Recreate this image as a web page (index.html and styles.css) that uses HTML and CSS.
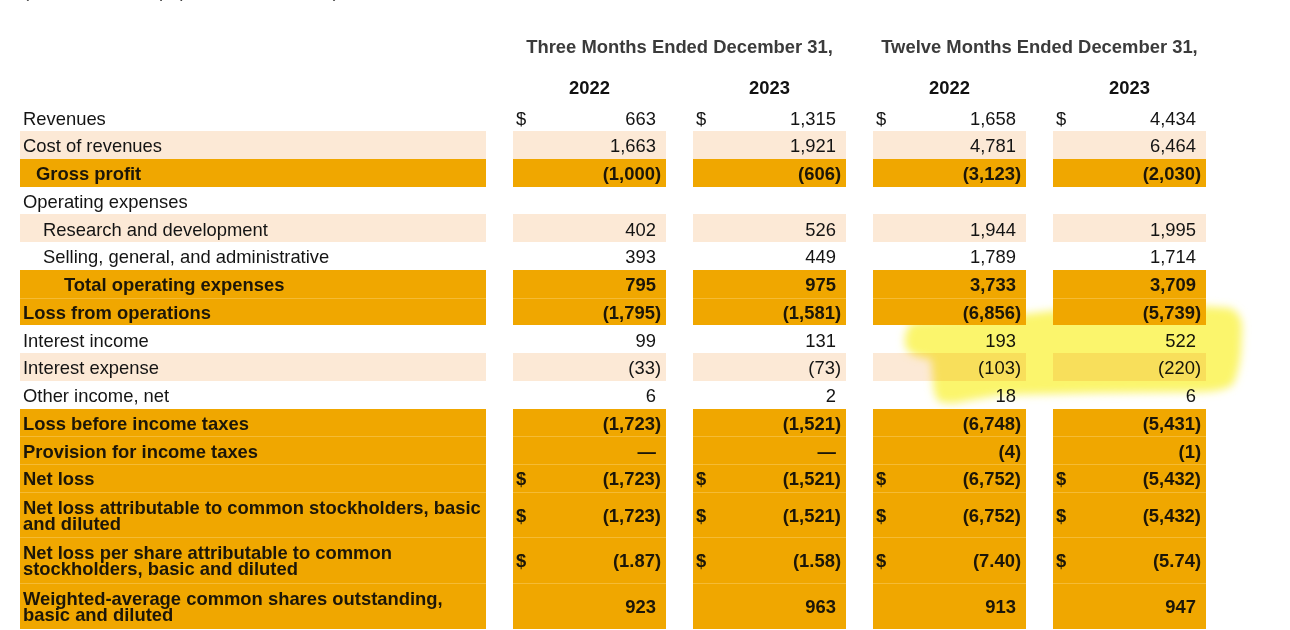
FILE: index.html
```html
<!DOCTYPE html>
<html lang="en">
<head>
<meta charset="utf-8">
<title>Condensed Consolidated Statements of Operations</title>
<link rel="stylesheet" href="styles.css">
</head>
<body>
<div class="page">
  <div class="sheet">
    <div class="caption">(in millions, except per share amounts)</div>

    <div class="grid periods">
      <div></div>
      <div class="span2">Three Months Ended December 31,</div>
      <div class="span2">Twelve Months Ended December 31,</div>
    </div>
    <div class="grid years">
      <div></div>
      <div>2022</div>
      <div>2023</div>
      <div>2022</div>
      <div>2023</div>
    </div>

    <div class="body">
      <div class="grid row">
        <div class="label">Revenues</div>
        <div class="cell"><span class="cur">$</span><span class="amt">663</span></div>
        <div class="cell"><span class="cur">$</span><span class="amt">1,315</span></div>
        <div class="cell"><span class="cur">$</span><span class="amt">1,658</span></div>
        <div class="cell"><span class="cur">$</span><span class="amt">4,434</span></div>
      </div>
      <div class="grid row peach">
        <div class="label">Cost of revenues</div>
        <div class="cell"><span class="amt">1,663</span></div>
        <div class="cell"><span class="amt">1,921</span></div>
        <div class="cell"><span class="amt">4,781</span></div>
        <div class="cell"><span class="amt">6,464</span></div>
      </div>
      <div class="grid row orange">
        <div class="label ind1">Gross profit</div>
        <div class="cell"><span class="amt">(1,000<span class="rp">)</span></span></div>
        <div class="cell"><span class="amt">(606<span class="rp">)</span></span></div>
        <div class="cell"><span class="amt">(3,123<span class="rp">)</span></span></div>
        <div class="cell"><span class="amt">(2,030<span class="rp">)</span></span></div>
      </div>
      <div class="grid row">
        <div class="label">Operating expenses</div>
        <div class="cell"></div>
        <div class="cell"></div>
        <div class="cell"></div>
        <div class="cell"></div>
      </div>
      <div class="grid row peach">
        <div class="label ind2">Research and development</div>
        <div class="cell"><span class="amt">402</span></div>
        <div class="cell"><span class="amt">526</span></div>
        <div class="cell"><span class="amt">1,944</span></div>
        <div class="cell"><span class="amt">1,995</span></div>
      </div>
      <div class="grid row">
        <div class="label ind2">Selling, general, and administrative</div>
        <div class="cell"><span class="amt">393</span></div>
        <div class="cell"><span class="amt">449</span></div>
        <div class="cell"><span class="amt">1,789</span></div>
        <div class="cell"><span class="amt">1,714</span></div>
      </div>
      <div class="grid row orange">
        <div class="label ind3">Total operating expenses</div>
        <div class="cell"><span class="amt">795</span></div>
        <div class="cell"><span class="amt">975</span></div>
        <div class="cell"><span class="amt">3,733</span></div>
        <div class="cell"><span class="amt">3,709</span></div>
      </div>
      <div class="grid row orange">
        <div class="label">Loss from operations</div>
        <div class="cell"><span class="amt">(1,795<span class="rp">)</span></span></div>
        <div class="cell"><span class="amt">(1,581<span class="rp">)</span></span></div>
        <div class="cell"><span class="amt">(6,856<span class="rp">)</span></span></div>
        <div class="cell"><span class="amt">(5,739<span class="rp">)</span></span></div>
      </div>
      <div class="grid row">
        <div class="label">Interest income</div>
        <div class="cell"><span class="amt">99</span></div>
        <div class="cell"><span class="amt">131</span></div>
        <div class="cell"><span class="amt">193</span></div>
        <div class="cell"><span class="amt">522</span></div>
      </div>
      <div class="grid row peach">
        <div class="label">Interest expense</div>
        <div class="cell"><span class="amt">(33<span class="rp">)</span></span></div>
        <div class="cell"><span class="amt">(73<span class="rp">)</span></span></div>
        <div class="cell"><span class="amt">(103<span class="rp">)</span></span></div>
        <div class="cell"><span class="amt">(220<span class="rp">)</span></span></div>
      </div>
      <div class="grid row">
        <div class="label">Other income, net</div>
        <div class="cell"><span class="amt">6</span></div>
        <div class="cell"><span class="amt">2</span></div>
        <div class="cell"><span class="amt">18</span></div>
        <div class="cell"><span class="amt">6</span></div>
      </div>
      <div class="grid row orange">
        <div class="label">Loss before income taxes</div>
        <div class="cell"><span class="amt">(1,723<span class="rp">)</span></span></div>
        <div class="cell"><span class="amt">(1,521<span class="rp">)</span></span></div>
        <div class="cell"><span class="amt">(6,748<span class="rp">)</span></span></div>
        <div class="cell"><span class="amt">(5,431<span class="rp">)</span></span></div>
      </div>
      <div class="grid row orange">
        <div class="label">Provision for income taxes</div>
        <div class="cell"><span class="amt">—</span></div>
        <div class="cell"><span class="amt">—</span></div>
        <div class="cell"><span class="amt">(4<span class="rp">)</span></span></div>
        <div class="cell"><span class="amt">(1<span class="rp">)</span></span></div>
      </div>
      <div class="grid row orange">
        <div class="label">Net loss</div>
        <div class="cell"><span class="cur">$</span><span class="amt">(1,723<span class="rp">)</span></span></div>
        <div class="cell"><span class="cur">$</span><span class="amt">(1,521<span class="rp">)</span></span></div>
        <div class="cell"><span class="cur">$</span><span class="amt">(6,752<span class="rp">)</span></span></div>
        <div class="cell"><span class="cur">$</span><span class="amt">(5,432<span class="rp">)</span></span></div>
      </div>
      <div class="grid row orange tall">
        <div class="label">Net loss attributable to common stockholders, basic and diluted</div>
        <div class="cell"><span class="cur">$</span><span class="amt">(1,723<span class="rp">)</span></span></div>
        <div class="cell"><span class="cur">$</span><span class="amt">(1,521<span class="rp">)</span></span></div>
        <div class="cell"><span class="cur">$</span><span class="amt">(6,752<span class="rp">)</span></span></div>
        <div class="cell"><span class="cur">$</span><span class="amt">(5,432<span class="rp">)</span></span></div>
      </div>
      <div class="grid row orange tall">
        <div class="label">Net loss per share attributable to common stockholders, basic and diluted</div>
        <div class="cell"><span class="cur">$</span><span class="amt">(1.87<span class="rp">)</span></span></div>
        <div class="cell"><span class="cur">$</span><span class="amt">(1.58<span class="rp">)</span></span></div>
        <div class="cell"><span class="cur">$</span><span class="amt">(7.40<span class="rp">)</span></span></div>
        <div class="cell"><span class="cur">$</span><span class="amt">(5.74<span class="rp">)</span></span></div>
      </div>
      <div class="grid row orange tall">
        <div class="label">Weighted-average common shares outstanding, basic and diluted</div>
        <div class="cell"><span class="amt">923</span></div>
        <div class="cell"><span class="amt">963</span></div>
        <div class="cell"><span class="amt">913</span></div>
        <div class="cell"><span class="amt">947</span></div>
      </div>
    </div>
  </div>

  <svg class="marker" width="1290" height="630" viewBox="0 0 1290 630" aria-hidden="true">
    <defs>
      <filter id="soft" x="-10%" y="-40%" width="120%" height="180%">
        <feGaussianBlur stdDeviation="4"/>
      </filter>
    </defs>
    <path filter="url(#soft)" fill="#fbf56c"
      d="M912 322 L960 318 L1026 314 L1060 310 L1120 308 L1200 306 L1230 308 Q1243 314 1242 330 L1241 352 Q1239 372 1233 384 Q1226 391 1200 392 L1100 393 L1000 395 L966 401 Q948 406 938 401 Q933 393 933 380 L931 359 Q911 357 906 348 Q902 334 912 322 Z"/>
  </svg>
</div>
</body>
</html>
```

FILE: styles.css
```css
html, body {
  margin: 0;
  padding: 0;
  overflow: hidden;
  background: #ffffff;
}

body {
  font-family: "Liberation Sans", Arial, Helvetica, sans-serif;
  font-size: 18.4px;
  color: #141414;
}

.page {
  position: relative;
  width: 1290px;
  height: 630px;
  overflow: hidden;
}

.sheet {
  padding-left: 20px;
}

.caption {
  margin-top: -20px;
  height: 21px;
  line-height: 21px;
  padding-left: 3px;
  white-space: nowrap;
  color: #444444;
}

.grid {
  display: grid;
  grid-template-columns: 466px repeat(4, 153px);
  column-gap: 27px;
}

.periods {
  margin-top: 35px;
  height: 21px;
  line-height: 21px;
  font-weight: bold;
  color: #3b3b3b;
}

.span2 {
  grid-column: span 2;
  text-align: center;
  white-space: nowrap;
}

.years {
  margin-top: 20px;
  height: 21px;
  line-height: 21px;
  font-weight: bold;
  color: #111111;
  text-align: center;
}

.body {
  margin-top: 5.25px;
}

.row {
  height: 27.75px;
}

.row.tall {
  height: 45.6px;
}

.row > div {
  display: flex;
  align-items: center;
  line-height: 16px;
  padding-top: 3px;
  box-sizing: border-box;
}

.row.tall > div {
  padding-top: 2px;
}

.label {
  padding-left: 3px;
  padding-right: 4px;
}

.label.ind1 { padding-left: 16px; }
.label.ind2 { padding-left: 23px; }
.label.ind3 { padding-left: 44px; }

.cell {
  padding-left: 3px;
}

.cur {
  margin-right: auto;
}

.amt {
  margin-left: auto;
  padding-right: 10px;
  white-space: nowrap;
}

.rp {
  margin-right: -5px;
}

.peach > div {
  background: #fce9d6;
}

.orange {
  position: relative;
  z-index: 2;
}

.orange > div {
  background: #f0a700;
  font-weight: bold;
  color: #1c1608;
}

.orange + .orange > div {
  box-shadow: inset 0 1px 0 rgba(255, 226, 150, 0.35);
}

.marker {
  position: absolute;
  left: 0;
  top: 0;
  z-index: 1;
  pointer-events: none;
  mix-blend-mode: multiply;
}
```
